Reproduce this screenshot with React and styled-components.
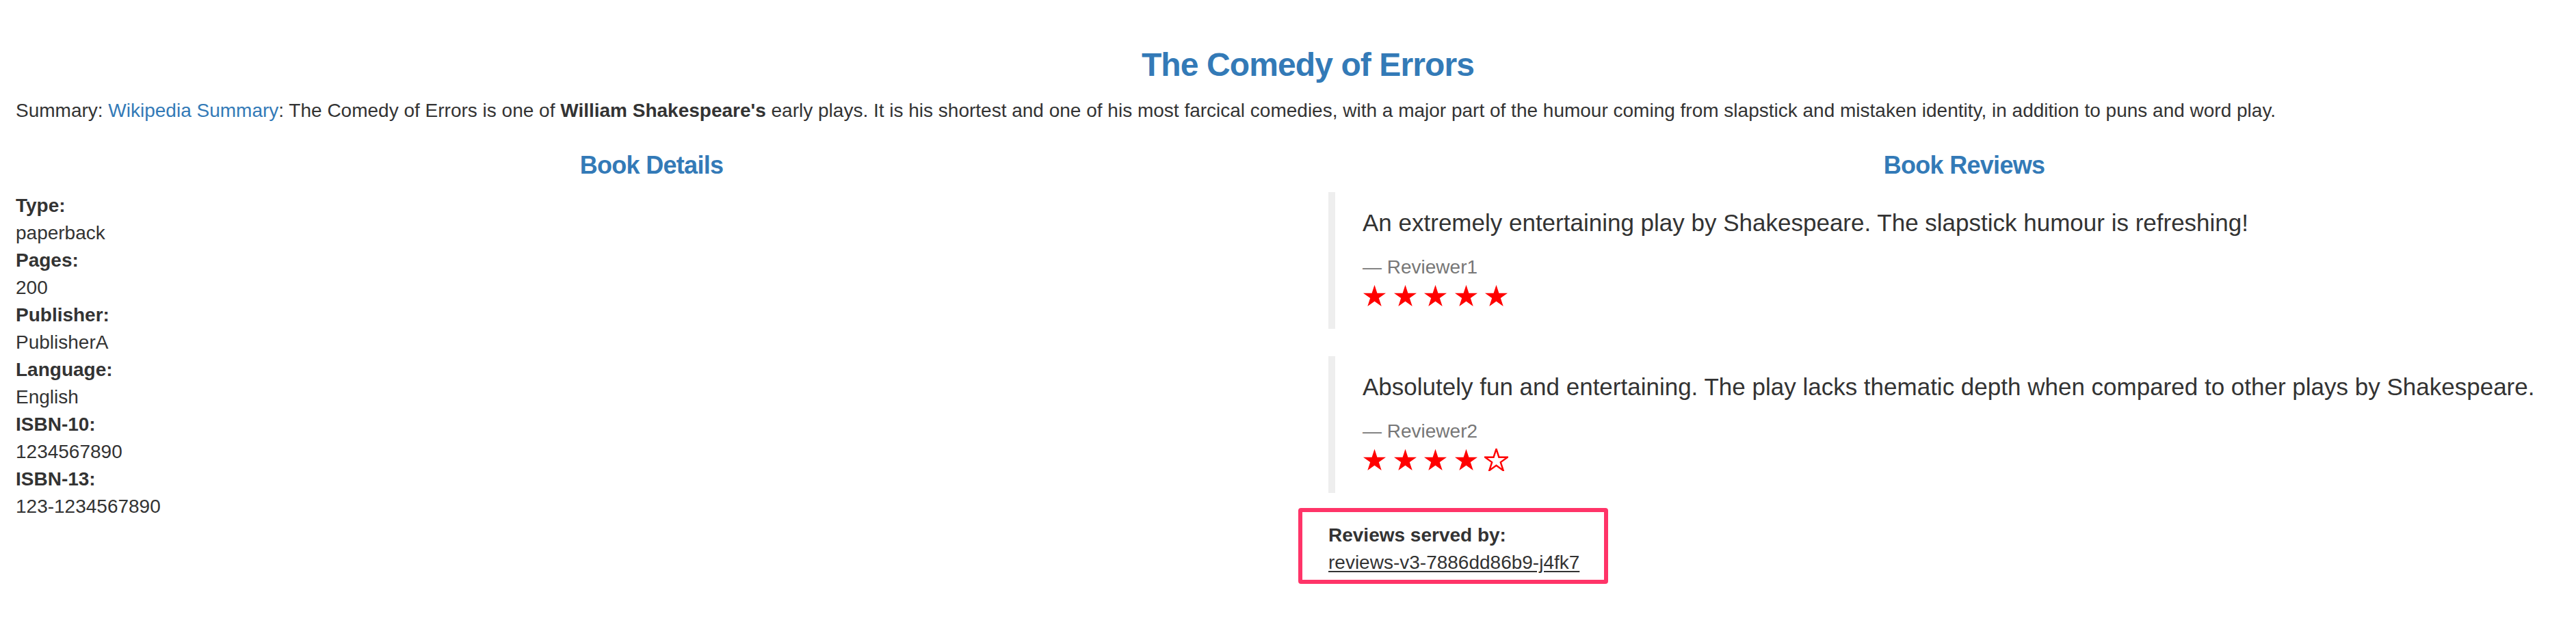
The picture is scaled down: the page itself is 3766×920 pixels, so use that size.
import React from 'react'
import styled, {createGlobalStyle} from 'styled-components'

// The page is a Bootstrap-like product page rendered at 2x.
// The row is a bit wider than the window, so it is cropped on both sides.

const GlobalStyle = createGlobalStyle`
  html, body {
    margin: 0;
    padding: 0;
    background: #fff;
    overflow: hidden;
  }
  body {
    font-family: "Liberation Sans", Arial, Helvetica, sans-serif;
    font-size: 28px;
    line-height: 40px;
    color: #333;
  }
  * {
    box-sizing: border-box;
  }
`;

const Viewport = styled('div')`
  width: 100%;
  overflow: hidden;
`;

const Page = styled('div')`
  width: 3838px;
  margin-left: -7px;
  padding-top: 29px;
`;

const Row = styled('div')`
  display: flex;
`;

const Col = styled('div')`
  flex: 0 0 ${props => props.span === 12 ? '3838px' : '1919px'};
  padding: 0 30px;
`;

const Title = styled('h3')`
  margin: 40px 0 20px;
  font-size: 48px;
  line-height: 1.1;
  font-weight: 700;
  letter-spacing: -0.9px;
  color: #337ab7;
  text-align: center;
`;

const Summary = styled('p')`
  margin: 0 0 20px;
`;

const Link = styled('a')`
  color: #337ab7;
  text-decoration: none;
`;

const SectionTitle = styled('h4')`
  margin: 20px 0 20px;
  font-size: 36px;
  line-height: 1.1;
  font-weight: 700;
  letter-spacing: -0.7px;
  color: #337ab7;
  text-align: center;
`;

const DetailList = styled('dl')`
  margin: 0 0 40px;
`;

const Term = styled('dt')`
  font-weight: 700;
`;

const Value = styled('dd')`
  margin: 0;
`;

const Review = styled('blockquote')`
  margin: 0 0 40px;
  padding: 20px 40px;
  border-left: 10px solid #eee;
  font-size: 35px;
  line-height: 50px;
`;

const ReviewText = styled('p')`
  margin: 0 0 20px;
`;

const Reviewer = styled('small')`
  display: block;
  font-size: 28px;
  line-height: 40px;
  color: #777;
  &:before {
    content: '\\2014 \\00A0';
  }
`;

const Stars = styled('div')`
  display: flex;
  gap: 9.6px;
  height: 50px;
  padding-top: 5px;
`;

const StarIcon = styled('svg')`
  width: 35px;
  height: 33px;
  display: block;
`;

const ServedBy = styled('div')`
  display: inline-block;
  margin: -18px 0 0 -44px;
  padding: 14px 36px 5px 38px;
  border: 6px solid #ff3468;
  border-radius: 4px;
`;

const ServedList = styled('dl')`
  margin: 0;
`;

const PodName = styled('a')`
  color: #333;
  text-decoration: underline;
  text-underline-offset: 3px;
  text-decoration-thickness: 2px;
`;

const STAR_POINTS = '50,0 61.23,34.55 97.55,34.55 68.17,55.9 79.39,90.45 50,69.1 20.61,90.45 31.83,55.9 2.45,34.55 38.77,34.55';

const Star = ({filled}) => (
    <StarIcon viewBox="0 -2 100 95">
        <polygon
            points={STAR_POINTS}
            fill={filled ? 'red' : '#fff'}
            stroke="red"
            strokeWidth={filled ? 0 : 7}
            strokeLinejoin="miter"
        />
    </StarIcon>
);

const details = [
    ['Type:', 'paperback'],
    ['Pages:', '200'],
    ['Publisher:', 'PublisherA'],
    ['Language:', 'English'],
    ['ISBN-10:', '1234567890'],
    ['ISBN-13:', '123-1234567890'],
];

const reviews = [
    {
        text: 'An extremely entertaining play by Shakespeare. The slapstick humour is refreshing!',
        reviewer: 'Reviewer1',
        stars: 5,
    },
    {
        text: 'Absolutely fun and entertaining. The play lacks thematic depth when compared to other plays by Shakespeare.',
        reviewer: 'Reviewer2',
        stars: 4,
    },
];

const App = () => {
    return (
        <Viewport>
            <GlobalStyle/>
            <Page>
                <Row>
                    <Col span={12}>
                        <Title>The Comedy of Errors</Title>
                        <Summary>
                            Summary: <Link href="#">Wikipedia Summary</Link>: The Comedy of Errors is one
                            of <b>William Shakespeare's</b> early plays. It is his shortest and one of his most
                            farcical comedies, with a major part of the humour coming from slapstick and mistaken
                            identity, in addition to puns and word play.
                        </Summary>
                    </Col>
                </Row>
                <Row>
                    <Col span={6}>
                        <SectionTitle>Book Details</SectionTitle>
                        <DetailList>
                            {details.map(([term, value]) => (
                                <React.Fragment key={term}>
                                    <Term>{term}</Term>
                                    <Value>{value}</Value>
                                </React.Fragment>
                            ))}
                        </DetailList>
                    </Col>
                    <Col span={6}>
                        <SectionTitle>Book Reviews</SectionTitle>
                        {reviews.map(review => (
                            <Review key={review.reviewer}>
                                <ReviewText>{review.text}</ReviewText>
                                <Reviewer>{review.reviewer}</Reviewer>
                                <Stars>
                                    {[...new Array(5)].map((_, i) => (
                                        <Star key={i} filled={i < review.stars}/>
                                    ))}
                                </Stars>
                            </Review>
                        ))}
                        <ServedBy>
                            <ServedList>
                                <Term>Reviews served by:</Term>
                                <Value>
                                    <PodName href="#">reviews-v3-7886dd86b9-j4fk7</PodName>
                                </Value>
                            </ServedList>
                        </ServedBy>
                    </Col>
                </Row>
            </Page>
        </Viewport>
    )
}

export default App
